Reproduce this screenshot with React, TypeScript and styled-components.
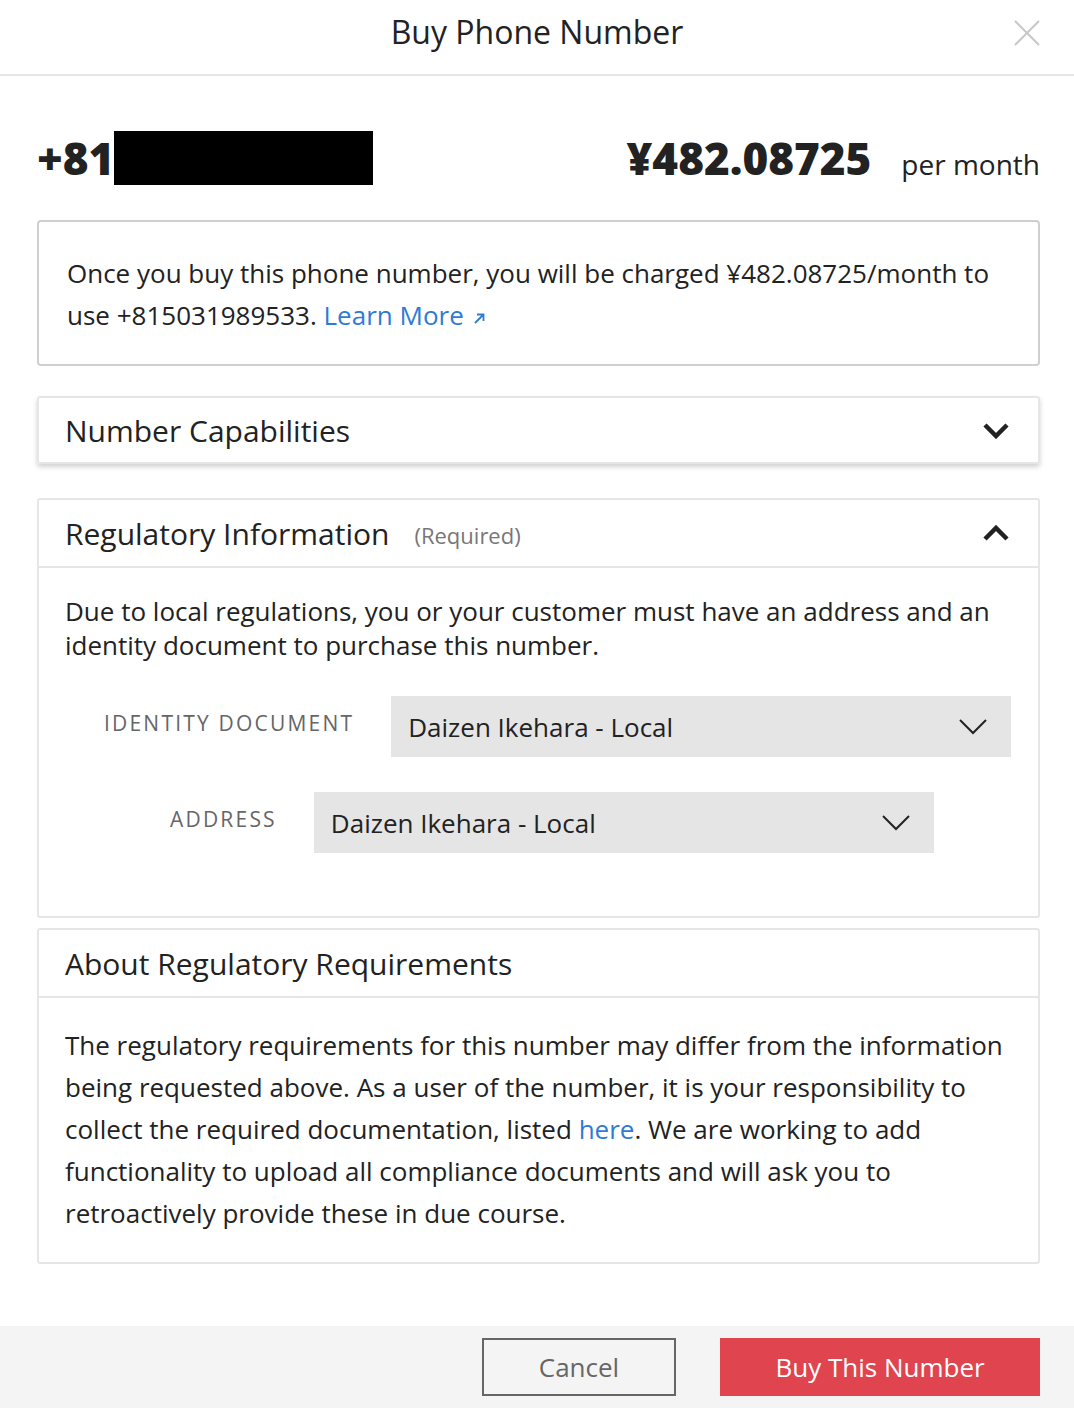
import React from "react";
import styled, { createGlobalStyle } from "styled-components";

const Global = createGlobalStyle`
  html, body { margin: 0; padding: 0; background: #fff; }
  body { font-family: "Open Sans", "Noto Sans", sans-serif; color: #222; }
  * { box-sizing: border-box; }
`;

const Modal = styled.div`
  width: 1074px;
  min-height: 1408px;
  display: flex;
  flex-direction: column;
  background: #fff;
`;

const Header = styled.header`
  height: 76px;
  border-bottom: 2px solid #e6e6e6;
  display: flex;
  align-items: center;
  justify-content: center;
  position: relative;
`;

const Title = styled.h1`
  margin: 0;
  font-size: 32px;
  font-weight: 400;
  color: #222;
  padding-bottom: 12px;
`;

const Close = styled.button`
  position: absolute;
  right: 32px;
  top: 18px;
  width: 30px;
  height: 30px;
  border: 0;
  background: none;
  padding: 0;
  display: flex;
  align-items: center;
  justify-content: center;
`;

const Content = styled.main`
  flex: 1;
  padding: 52px 34px 40px 37px;
  display: flex;
  flex-direction: column;
`;

const PriceRow = styled.div`
  display: flex;
  align-items: center;
  justify-content: space-between;
  height: 60px;
  margin-bottom: 32px;
`;

const Phone = styled.div`
  display: flex;
  align-items: center;
  font-size: 44px;
  font-weight: 800;
  color: #222;
`;

const Redacted = styled.span`
  display: inline-block;
  width: 259px;
  height: 54px;
  background: #000;
  margin-left: 0;
`;

const Price = styled.div`
  display: flex;
  align-items: baseline;
  gap: 30px;
`;

const Amount = styled.span`
  font-size: 44px;
  font-weight: 800;
`;

const PerMonth = styled.span`
  font-size: 28px;
  font-weight: 400;
`;

const InfoBox = styled.div`
  border: 2px solid #cfcfcf;
  border-radius: 4px;
  padding: 30px 28px 28px 28px;
  font-size: 26px;
  line-height: 42px;
  margin-bottom: 30px;
`;

const Link = styled.a`
  color: #2f7bd3;
  text-decoration: none;
`;

const Card = styled.section<{ $raised?: boolean }>`
  border: 2px solid #e6e6e6;
  border-radius: 3px;
  box-shadow: ${(p) => (p.$raised ? "0 3px 5px rgba(0,0,0,0.18)" : "none")};
  margin-bottom: ${(p) => (p.$raised ? "34px" : "10px")};
`;

const CardHeader = styled.div<{ $divided?: boolean }>`
  height: ${(p) => (p.$divided ? "68px" : "64px")};
  display: flex;
  align-items: center;
  padding: 0 28px 0 26px;
  border-bottom: ${(p) => (p.$divided ? "2px solid #e6e6e6" : "none")};
`;

const CardTitle = styled.h2`
  margin: 0;
  font-size: 30px;
  font-weight: 400;
  color: #222;
`;

const Hint = styled.span`
  font-size: 22px;
  color: #777;
  margin-left: 25px;
  margin-top: 4px;
`;

const Spacer = styled.div`
  flex: 1;
`;

const CardBody = styled.div<{ $pad?: string }>`
  padding: ${(p) => p.$pad || "26px 26px 30px 26px"};
  font-size: 26px;
  line-height: 34px;
`;

const Paragraph = styled.p<{ $lh?: number }>`
  margin: 0;
  line-height: ${(p) => p.$lh || 34}px;
`;

const Form = styled.div`
  display: flex;
  flex-direction: column;
  gap: 35px;
  margin-top: 34px;
  padding-bottom: 37px;
`;

const FieldRow = styled.div<{ $offset: number }>`
  display: flex;
  align-items: center;
  gap: 37px;
  padding-left: ${(p) => p.$offset}px;
`;

const Label = styled.label`
  font-size: 21px;
  letter-spacing: 2.2px;
  color: #666;
  text-transform: uppercase;
  white-space: nowrap;
  margin-top: -8px;
`;

const Select = styled.div`
  width: 620px;
  height: 61px;
  background: #e5e5e5;
  display: flex;
  align-items: center;
  justify-content: space-between;
  padding: 0 24px 0 17px;
  font-size: 26px;
  color: #222;
`;

const Footer = styled.footer`
  height: 82px;
  background: #f4f4f4;
  display: flex;
  align-items: flex-start;
  justify-content: flex-end;
  gap: 44px;
  padding: 12px 34px 0 0;
`;

const Button = styled.button<{ $primary?: boolean }>`
  height: 58px;
  font-family: "Open Sans", "Noto Sans", sans-serif;
  font-size: 26px;
  cursor: pointer;
  border: ${(p) => (p.$primary ? "0" : "2px solid #666")};
  background: ${(p) => (p.$primary ? "#e0444e" : "transparent")};
  color: ${(p) => (p.$primary ? "#fff" : "#666")};
  width: ${(p) => (p.$primary ? "320px" : "194px")};
`;

const Chevron = ({ up }: { up?: boolean }) => (
  <svg width="28" height="18" viewBox="0 0 28 18">
    <path
      d={up ? "M3 15 L14 4 L25 15" : "M3 4 L14 15 L25 4"}
      fill="none"
      stroke="#222"
      strokeWidth="4.5"
      strokeLinejoin="miter"
    />
  </svg>
);

const ThinChevron = () => (
  <svg width="28" height="16" viewBox="0 0 28 16">
    <path d="M1 1 L14 14 L27 1" fill="none" stroke="#222" strokeWidth="2" />
  </svg>
);

const ExternalArrow = () => (
  <svg width="13" height="13" viewBox="0 0 13 13" style={{ marginLeft: 9 }}>
    <path d="M2 11 L10 3 M4 2.5 H10.5 V9" fill="none" stroke="#2f7bd3" strokeWidth="1.8" />
  </svg>
);

export default function App() {
  return (
    <>
      <Global />
      <Modal>
        <Header>
          <Title>Buy Phone Number</Title>
          <Close aria-label="Close">
            <svg width="28" height="28" viewBox="0 0 28 28">
              <path d="M2 2 L26 26 M26 2 L2 26" stroke="#c8c8c8" strokeWidth="2" />
            </svg>
          </Close>
        </Header>
        <Content>
          <PriceRow>
            <Phone>
              +81
              <Redacted />
            </Phone>
            <Price>
              <Amount>¥482.08725</Amount>
              <PerMonth>per month</PerMonth>
            </Price>
          </PriceRow>

          <InfoBox>
            Once you buy this phone number, you will be charged ¥482.08725/month to use +815031989533.{" "}
            <Link href="#">
              Learn More
              <ExternalArrow />
            </Link>
          </InfoBox>

          <Card $raised>
            <CardHeader>
              <CardTitle>Number Capabilities</CardTitle>
              <Spacer />
              <Chevron />
            </CardHeader>
          </Card>

          <Card>
            <CardHeader $divided>
              <CardTitle>Regulatory Information</CardTitle>
              <Hint>(Required)</Hint>
              <Spacer />
              <Chevron up />
            </CardHeader>
            <CardBody $pad="26px 26px 26px 26px">
              <Paragraph>
                Due to local regulations, you or your customer must have an address and an identity document to
                purchase this number.
              </Paragraph>
              <Form>
                <FieldRow $offset={39}>
                  <Label>Identity Document</Label>
                  <Select>
                    Daizen Ikehara - Local
                    <ThinChevron />
                  </Select>
                </FieldRow>
                <FieldRow $offset={105}>
                  <Label>Address</Label>
                  <Select>
                    Daizen Ikehara - Local
                    <ThinChevron />
                  </Select>
                </FieldRow>
              </Form>
            </CardBody>
          </Card>

          <Card>
            <CardHeader $divided>
              <CardTitle>About Regulatory Requirements</CardTitle>
            </CardHeader>
            <CardBody $pad="26px 26px 28px 26px">
              <Paragraph $lh={42}>
                The regulatory requirements for this number may differ from the information being requested above.
                As a user of the number, it is your responsibility to collect the required documentation, listed{" "}
                <Link href="#">here</Link>. We are working to add functionality to upload all compliance documents
                and will ask you to retroactively provide these in due course.
              </Paragraph>
            </CardBody>
          </Card>
        </Content>
        <Footer>
          <Button>Cancel</Button>
          <Button $primary>Buy This Number</Button>
        </Footer>
      </Modal>
    </>
  );
}
